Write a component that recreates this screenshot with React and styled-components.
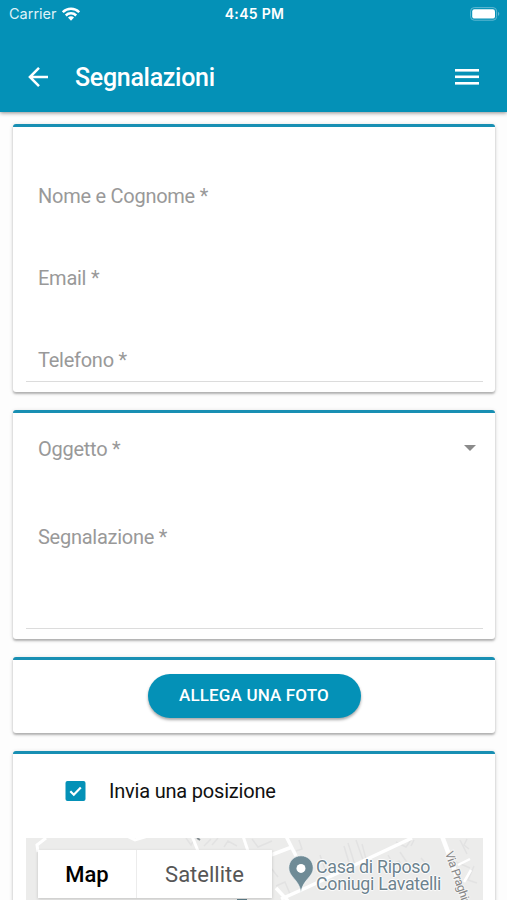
import styled, {createGlobalStyle} from 'styled-components';

export default function App() {
  return (
    <>
      <GlobalStyle />
      <Screen>
        <Header>
          <StatusBar>
            <Carrier>
              Carrier
              <WifiIcon />
            </Carrier>
            <Clock>4:45 PM</Clock>
            <BatteryIcon />
          </StatusBar>
          <Toolbar>
            <BackIcon />
            <Title>Segnalazioni</Title>
            <MenuIcon />
          </Toolbar>
        </Header>
        <Form>
          <Card $height={268}>
            <Field $height={94}>
              <Label $bottom={11}>Nome e Cognome *</Label>
            </Field>
            <Field $height={82}>
              <Label $bottom={11}>Email *</Label>
            </Field>
            <Field $height={79} $line>
              <Label $bottom={7}>Telefono *</Label>
            </Field>
          </Card>
          <Card $height={229}>
            <Field $height={59}>
              <Label $bottom={9}>Oggetto *</Label>
              <Caret viewBox="0 0 12 6">
                <path d="M0 0h12L6 6z" fill="#8b8b8b" />
              </Caret>
            </Field>
            <Field $height={157} $line>
              <Label $bottom={77}>Segnalazione *</Label>
            </Field>
          </Card>
          <Card $height={76}>
            <PhotoButton type="button">Allega una foto</PhotoButton>
          </Card>
          <Card $height={190}>
            <CheckRow>
              <Checkbox viewBox="0 0 20 20">
                <rect width="20" height="20" rx="2" fill="#0491b7" />
                <path d="M4.8 10.2l3.5 3.5 7-7.2" fill="none" stroke="#fff" strokeWidth="2.2" />
              </Checkbox>
              Invia una posizione
            </CheckRow>
            <Map>
              <Streets />
              <MapTypes>
                <MapType $active>Map</MapType>
                <MapType>Satellite</MapType>
              </MapTypes>
              <Place>
                <PinIcon />
                <PlaceName>
                  <span>Casa di Riposo</span>
                  <span>Coniugi Lavatelli</span>
                </PlaceName>
              </Place>
            </Map>
          </Card>
        </Form>
      </Screen>
    </>
  );
}

function WifiIcon() {
  return (
    <svg width="18" height="14" viewBox="0 0 18 14" fill="none" stroke="#fff" strokeWidth="2.5">
      <path d="M.8 5.2a11.6 11.6 0 0 1 16.4 0" />
      <path d="M3.8 8.5a7.4 7.4 0 0 1 10.4 0" />
      <path d="M9 13.8l-3-3.2a4.2 4.2 0 0 1 6 0z" fill="#fff" stroke="none" />
    </svg>
  );
}

function BatteryIcon() {
  return (
    <Battery width="30" height="14" viewBox="0 0 30 14">
      <rect x=".6" y=".6" width="26" height="12.6" rx="3.6" fill="none" stroke="#5fb8d2" />
      <rect x="2.2" y="2.2" width="22.8" height="9.4" rx="2.2" fill="#fff" />
      <path d="M28 4.8c1.8.8 1.8 3.4 0 4.2z" fill="#5fb8d2" />
    </Battery>
  );
}

function BackIcon() {
  return (
    <svg width="20" height="20" viewBox="0 0 20 20" fill="none" stroke="#fff" strokeWidth="2.5">
      <path d="M20 10H2M11 .9L1.9 10l9.1 9.1" />
    </svg>
  );
}

function MenuIcon() {
  return (
    <Menu width="24" height="16" viewBox="0 0 24 16" fill="#fff">
      <rect width="24" height="2.6" />
      <rect y="6.5" width="24" height="2.6" />
      <rect y="13" width="24" height="2.6" />
    </Menu>
  );
}

function PinIcon() {
  return (
    <svg width="26" height="38" viewBox="0 0 26 38">
      <path
        d="M13 .8C6 .8.8 6.2.8 12.9c0 9.3 10 11.1 12.2 24.3 2.2-13.200 12.200-15 12.200-24.300C25.200 6.200 20 .8 13 .8z"
        fill="#6f8b96"
        stroke="#fff"
        strokeOpacity=".6"
      />
      <circle cx="13" cy="13.4" r="4.5" fill="#fff" />
    </svg>
  );
}

function Streets() {
  return (
    <StreetLayer viewBox="0 0 457 104" fill="none">
      <g stroke="#e2e2e2" strokeWidth="1.5">
        <path d="M160 0l5 7 4-7M178 8l7-7M186 7l6-7M198 9l4-6 9 5M226 1l6 8 14-6" />
        <path d="M273 2l3 9-6 2M318 8l6 20M322 5l7 22M330 2l7 20M336 6l4 15M316 30l10-5" />
        <path d="M300 34l-6-17M362 17l5 9 6-3 5 8M374 14l8 12M370 4l10 5 5-7M388 2l-3 6" />
        <path d="M434 2l7 14M441 1l-3 6 5 4M430 24l14 6M448 28l-6 14 9 3M395 20l8 9" />
        <path d="M250 48l9-4 5 12M245 30l7 9" />
      </g>
      <g stroke="#fff">
        <path d="M12 14l-1-7L20 0M101-2l8 4 13-4M166-2l6 15M217-2l5 15" strokeWidth="3" />
        <path d="M386 0l-32 15-72 34-27 12M245 17l21-8M260-2l10 20M250 50l12 13" strokeWidth="3.5" />
        <path d="M416-2l6 16 18 50" strokeWidth="4.5" />
        <path d="M432 27l12-6M445 32l-7 12" strokeWidth="2.5" />
      </g>
      <path d="M171 0l3 2" stroke="#858d91" strokeWidth="2" />
      <path d="M211 62h10" stroke="#5f7f8b" strokeWidth="2" />
      <StreetName transform="translate(419 15) rotate(71)">Via Praghini</StreetName>
    </StreetLayer>
  );
}

const GlobalStyle = createGlobalStyle`
  * {
    box-sizing: border-box;
  }
  body {
    margin: 0;
    overflow: hidden;
    background-color: #fdfdfd;
    font-family: Roboto, sans-serif;
  }
`;

const Screen = styled.div`
  height: 900px;
  overflow: hidden;
`;

const Header = styled.header`
  height: 112px;
  background-color: #0491b7;
  color: white;
  box-shadow: 0 1px 4px rgba(0, 0, 0, 0.45);
`;

const StatusBar = styled.div`
  display: grid;
  grid-template-columns: 1fr auto 1fr;
  align-items: center;
  height: 27px;
  padding: 0 7px 0 9px;
  font-family: Inter, sans-serif;
  font-size: 14.5px;
`;

const Carrier = styled.span`
  display: flex;
  align-items: center;
  gap: 5px;
  color: #dff2f7;
`;

const Clock = styled.span`
  font-size: 14px;
  font-weight: 600;
  letter-spacing: 0.3px;
`;

const Battery = styled.svg`
  justify-self: end;
`;

const Toolbar = styled.div`
  display: flex;
  align-items: center;
  height: 85px;
  padding: 15px 28px 0;
`;

const Title = styled.h1`
  margin: 2px 0 0 27px;
  font-size: 25px;
  font-weight: 500;
  letter-spacing: -0.3px;
  line-height: 30px;
`;

const Menu = styled.svg`
  margin-left: auto;
`;

const Form = styled.main`
  display: flex;
  flex-direction: column;
  gap: 18px;
  padding: 12px 12px 0 13px;
`;

const Card = styled.section`
  flex: none;
  height: ${({$height}) => $height}px;
  padding: 0 12px 0 13px;
  border-top: 3px solid #188fb3;
  border-radius: 3px;
  background-color: white;
  box-shadow: 0 2px 2px rgba(0, 0, 0, 0.22), 0 1px 4px rgba(0, 0, 0, 0.16);
`;

const Field = styled.div`
  display: flex;
  align-items: flex-end;
  justify-content: space-between;
  height: ${({$height}) => $height}px;
  padding: 0 7px 0 12px;
  border-bottom: ${({$line}) => ($line ? '1px solid #dcdcdc' : 'none')};
`;

const Label = styled.label`
  padding-bottom: ${({$bottom}) => $bottom}px;
  color: #999;
  font-size: 20px;
  letter-spacing: -0.26px;
  line-height: 28px;
`;

const Caret = styled.svg`
  width: 12px;
  height: 6px;
  margin-bottom: 21px;
`;

const PhotoButton = styled.button`
  display: block;
  width: 213px;
  height: 44px;
  margin: 14px 0 0 122px;
  padding: 0 1px 2px 0;
  border: none;
  border-radius: 22px;
  background-color: #0491b7;
  color: white;
  font-family: inherit;
  font-size: 17px;
  font-weight: 500;
  letter-spacing: 0.15px;
  text-transform: uppercase;
  box-shadow: 0 2px 3px rgba(0, 0, 0, 0.35);
`;

const CheckRow = styled.label`
  display: flex;
  align-items: center;
  gap: 23px;
  height: 84px;
  padding: 0 0 10px 39px;
  color: #111;
  font-size: 20px;
  letter-spacing: -0.2px;
`;

const Checkbox = styled.svg`
  width: 21px;
  height: 20px;
`;

const Map = styled.div`
  display: flex;
  position: relative;
  height: 104px;
  padding: 12px;
  overflow: hidden;
  background-color: #ececeb;
`;

const StreetLayer = styled.svg`
  position: absolute;
  top: 0;
  left: 0;
  width: 457px;
  height: 104px;
`;

const StreetName = styled.text`
  fill: #858585;
  stroke: #f4f4f4;
  stroke-width: 2px;
  paint-order: stroke;
  font-size: 12px;
  letter-spacing: -0.4px;
`;

const MapTypes = styled.div`
  display: flex;
  position: relative;
  width: 234px;
  height: 48px;
  background-color: white;
  box-shadow: 0 1px 3px rgba(0, 0, 0, 0.18);
`;

const MapType = styled.div`
  width: ${({$active}) => ($active ? '99px' : '135px')};
  border-right: ${({$active}) => ($active ? '1px solid #ececec' : 'none')};
  color: ${({$active}) => ($active ? '#000' : '#565656')};
  font-size: 22px;
  font-weight: ${({$active}) => ($active ? 500 : 400)};
  line-height: 49px;
  text-align: center;
`;

const Place = styled.div`
  display: flex;
  position: relative;
  align-items: flex-start;
  margin: 5px 0 0 16px;
`;

const PlaceName = styled.div`
  display: flex;
  flex-direction: column;
  margin: 3px 0 0 2px;
  color: #6d838e;
  font-size: 17.8px;
  letter-spacing: -0.28px;
  line-height: 17px;
  white-space: nowrap;
  text-shadow: 1px 0 1px white, -1px 0 1px white, 0 1px 1px white, 0 -1px 1px white;
`;
